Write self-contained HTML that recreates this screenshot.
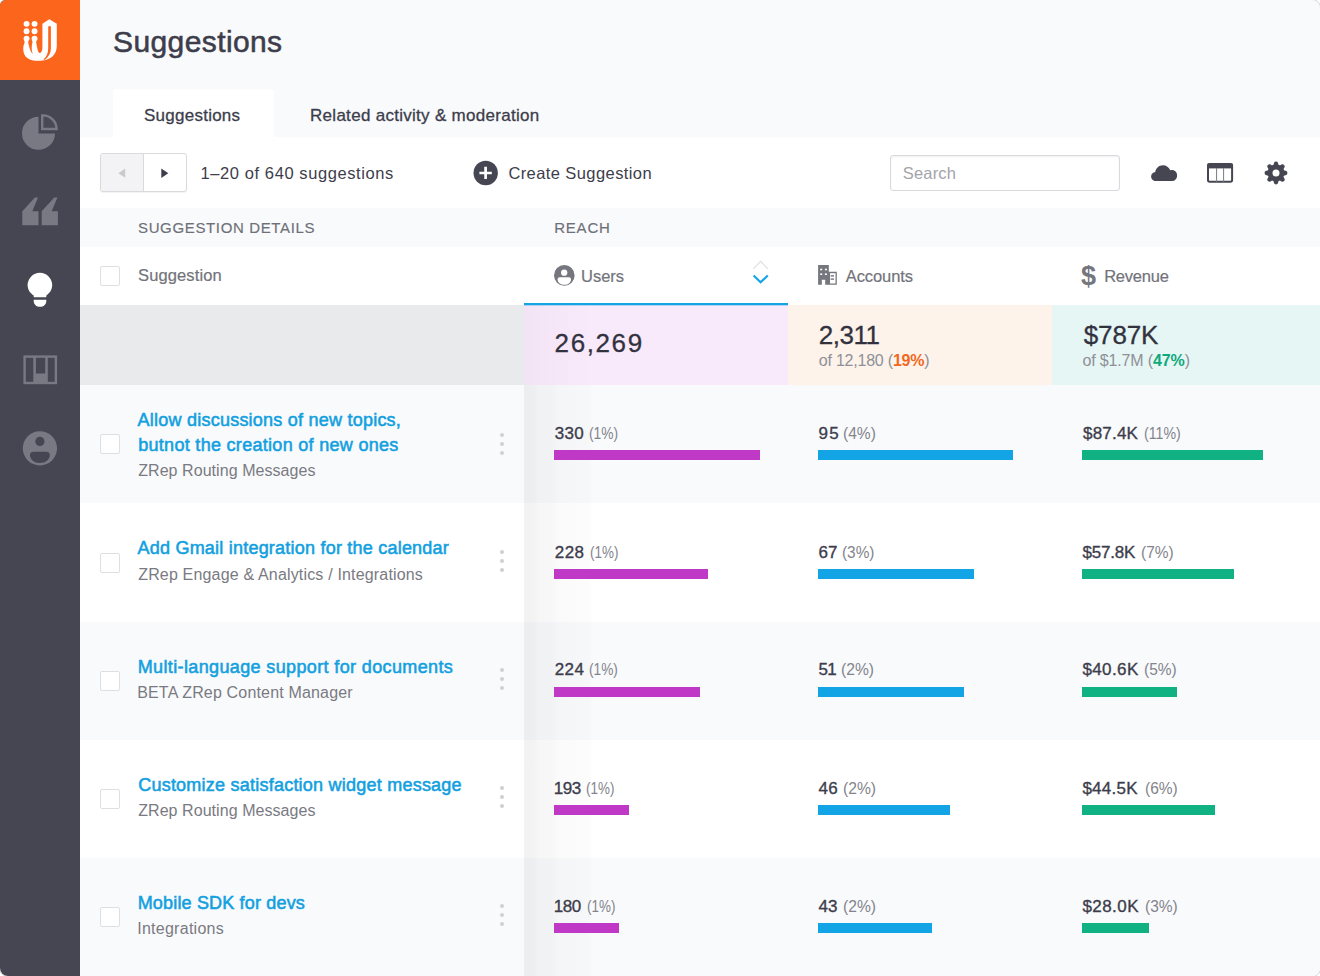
<!DOCTYPE html>
<html lang="en">
<head>
<meta charset="utf-8">
<title>Suggestions</title>
<style>
*{box-sizing:border-box;margin:0;padding:0}
html,body{width:1320px;height:976px;overflow:hidden;background:#fff}
body{font-family:"Liberation Sans",sans-serif;color:#3d3d4b;position:relative}
.app{position:absolute;left:0;top:0;width:1320px;height:976px;background:#f9fafc;border-radius:6px 8px 8px 8px;overflow:hidden;box-shadow:0 0 0 1px rgba(60,60,70,.18)}
.abs{position:absolute}
.t{position:absolute;white-space:nowrap;line-height:1}
/* sidebar */
.side{position:absolute;left:0;top:0;width:80px;height:976px;background:#464652}
.logo{position:absolute;left:0;top:0;width:80px;height:80px;background:#fc661c}
/* bands */
.band{position:absolute;left:80px;width:1240px}
.white{background:#fff}
.alt{background:#f9fafc}
.tab{position:absolute;left:113px;top:89px;width:161px;height:49px;background:#fff;border-radius:3px 3px 0 0}
.pager{position:absolute;left:100px;top:153px;width:87px;height:39px;border:1px solid #d9dadd;border-radius:3px;background:#fff;box-shadow:0 1px 1px rgba(0,0,0,.05)}
.pager .l{position:absolute;left:0;top:0;width:43px;height:37px;background:#f3f3f5;border-right:1px solid #d9dadd;border-radius:2px 0 0 2px}
.search{position:absolute;left:890px;top:155px;width:230px;height:36px;border:1px solid #d7d9dd;border-radius:3px;background:#fff;box-shadow:inset 0 1px 2px rgba(0,0,0,.06)}
.cb{position:absolute;left:100px;width:20px;height:20px;border:1px solid #dedfe3;border-radius:2px;background:#fff}
.ttl{color:#12a0df;font-size:18px;-webkit-text-stroke:.55px #12a0df}
.sub{color:#797a82;font-size:16px}
.num{font-size:17px;color:#3d3d4b;-webkit-text-stroke:.35px #3d3d4b}
.pct{color:#83848c;font-size:17px;transform-origin:0 50%}
.bar{position:absolute;height:10px}
.m{background:#c038c6}.b{background:#13a4e6}.g{background:#10b284}
.dots{position:absolute;left:500px;width:4px}
.dots i{display:block;width:4px;height:4px;border-radius:2px;background:#cfd0d4;margin-bottom:5px}
.shade{position:absolute;left:524px;top:385px;width:68px;height:591px;background:linear-gradient(90deg,rgba(20,20,30,.056) 0,rgba(20,20,30,.052) 15%,rgba(20,20,30,.036) 22%,rgba(20,20,30,.03) 42%,rgba(20,20,30,.019) 50%,rgba(20,20,30,.013) 96%,rgba(20,20,30,0) 100%)}
.shade2{position:absolute;left:524px;top:305px;width:68px;height:80px;background:linear-gradient(90deg,rgba(60,30,70,.035),rgba(60,30,70,.015) 50%,rgba(60,30,70,0))}
</style>
</head>
<body>
<div class="app">

<!-- bands -->
<div class="band white" style="top:137px;height:71px"></div>
<div class="band white" style="top:247px;height:58px"></div>
<div class="tab"></div>

<!-- summary row -->
<div class="abs" style="left:80px;top:305px;width:444px;height:80px;background:#e9eaec"></div>
<div class="abs" style="left:524px;top:305px;width:264px;height:80px;background:#f9eafb"></div>
<div class="abs" style="left:788px;top:305px;width:264px;height:80px;background:#fdf3ea"></div>
<div class="abs" style="left:1052px;top:305px;width:268px;height:80px;background:#e5f6f4"></div>

<!-- rows -->
<div class="band alt" style="top:385px;height:118px"></div>
<div class="band white" style="top:503px;height:119px"></div>
<div class="band alt" style="top:622px;height:118px"></div>
<div class="band white" style="top:740px;height:118px"></div>
<div class="band alt" style="top:858px;height:118px"></div>
<div class="shade"></div><div class="shade2"></div>
<div class="abs" style="left:524px;top:303px;width:264px;height:2px;background:#14a4e6"></div><div class="abs" style="left:524px;top:305px;width:264px;height:1px;background:rgba(20,164,230,.3)"></div>

<!-- sidebar -->
<div class="side">
  <div class="logo">
    <svg class="abs" style="left:15px;top:10px" width="50" height="60" viewBox="0 0 50 60">
      <g fill="#fff">
        <circle cx="11.56" cy="13.84" r="2.95"/><circle cx="19.56" cy="13.84" r="2.95"/>
        <circle cx="11.56" cy="21.2" r="2.95"/><circle cx="19.56" cy="21.2" r="2.95"/>
        <circle cx="11.56" cy="28.6" r="2.95"/><circle cx="19.56" cy="28.6" r="2.95"/>
        <path d="M9.5 32.6 C9.5 34.5 8.3 35 8.3 37.5 L8.3 39.5 C8.3 46.5 14 50.8 21 50.8 L24.5 50.8 C34.5 50.8 41.8 45.5 41.8 36 L41.8 13.8 L34.4 9.2 L27.4 13.8 L27.4 38 C27.4 41 26 43 24.6 43 C23 43 22.3 38.5 21.2 32.6 L21.2 30 L17.4 30 L17.4 32.6 C16.5 36 16.3 40 17.8 44 C15 41.5 14.2 37 13.2 32.6 L13.2 30 L9.5 30 Z"/>
      </g>
      <path fill="#fc661c" d="M33.2 17.3 Q33.2 16 34.55 16 Q35.9 16 35.9 17.3 L35.9 38 C35.9 44 32.5 48 29.2 50.1 L28.5 49.2 C31.5 47 33.2 43.5 33.2 38 Z"/>
    </svg>
  </div>
  <!-- pie -->
  <svg class="abs" style="left:20px;top:112px" width="40" height="40" viewBox="20 112 40 40">
    <path fill="#797983" d="M38.5 116.8 A16.5 16.5 0 1 0 55 133.4 L38.5 133.4 Z"/>
    <path fill="#494956" stroke="#797983" stroke-width="2.4" stroke-linejoin="miter" d="M42.2 129 L42.2 115.4 A13.8 13.8 0 0 1 56.6 129 Z"/>
  </svg>
  <!-- quotes -->
  <svg class="abs" style="left:20px;top:195px" width="40" height="32" viewBox="20 195 40 32">
    <path fill="#797983" d="M22.3 211.3 L34.9 197.4 L38 197.4 L32.3 211.3 L38.5 211.3 L38.5 225.3 L22.3 225.3 Z"/>
    <path fill="#797983" d="M41.7 211.3 L54.3 197.4 L57.4 197.4 L51.7 211.3 L57.9 211.3 L57.9 225.3 L41.7 225.3 Z"/>
  </svg>
  <!-- bulb -->
  <svg class="abs" style="left:24px;top:270px" width="32" height="40" viewBox="24 270 32 40">
    <path fill="#fff" d="M33.7 297.3 L33.7 295.4 C29.8 293.2 27.6 289.4 27.6 285.1 A12.3 12.3 0 0 1 52.2 285.1 C52.2 289.4 50 293.2 46.3 295.4 L46.3 297.3 Z"/>
    <path fill="#fff" d="M33.7 299.8 L46.3 299.8 L46.3 301 C46.3 304.5 43.5 306.8 40 306.8 C36.5 306.8 33.7 304.5 33.7 301 Z"/>
  </svg>
  <!-- board -->
  <svg class="abs" style="left:20px;top:352px" width="40" height="36" viewBox="20 352 40 36">
    <rect x="24.6" y="356.6" width="31.3" height="26.4" fill="none" stroke="#797983" stroke-width="2.4"/>
    <rect x="33.3" y="356" width="2.6" height="27" fill="#797983"/>
    <rect x="45.2" y="356" width="2.6" height="27" fill="#797983"/>
    <rect x="34" y="373.5" width="12" height="10" fill="#797983"/>
  </svg>
  <!-- user -->
  <svg class="abs" style="left:20px;top:428px" width="40" height="40" viewBox="20 428 40 40">
    <circle cx="39.9" cy="448.3" r="17.1" fill="#797983"/>
    <circle cx="39.9" cy="441.4" r="4.6" fill="#464652"/>
    <path fill="#464652" d="M30 455 C30 452.8 31.5 451.8 33.5 451.8 L46.3 451.8 C48.3 451.8 49.8 452.8 49.8 455 C49.8 459.5 45.5 463 39.9 463 C34.3 463 30 459.5 30 455 Z"/>
  </svg>
</div>

<!-- title -->
<div class="t" id="title" style="-webkit-text-stroke:.55px #3d3d4b;left:113.0px;top:27px;font-size:30px;letter-spacing:0.40px">Suggestions</div>

<!-- tabs -->
<div class="t" id="tab1" style="left:144.0px;top:107px;font-size:17px;-webkit-text-stroke:.3px #3d3d4b;letter-spacing:0.25px">Suggestions</div>
<div class="t" id="tab2" style="left:310.0px;top:107px;font-size:17px;-webkit-text-stroke:.3px #3d3d4b;letter-spacing:0.29px">Related activity &amp; moderation</div>

<!-- toolbar -->
<div class="pager"><div class="l"></div></div>
<div class="t" id="range" style="left:200.6px;top:165px;font-size:16.5px;letter-spacing:0.58px">1–20 of 640 suggestions</div>
<div class="t" id="create" style="left:508.4px;top:165px;font-size:16.5px;letter-spacing:0.41px">Create Suggestion</div>
<div class="search"></div>
<div class="t" id="search" style="left:902.8px;top:165px;font-size:16.5px;color:#a3a4aa;letter-spacing:0.16px">Search</div>


<!-- pager arrows -->
<svg class="abs" style="left:100px;top:153px" width="87" height="39" viewBox="100 153 87 39">
  <path fill="#c9cacf" d="M125.2 168.6 L125.2 177.8 L118.4 173.2 Z"/>
  <path fill="#3d3d4b" d="M161.3 168.4 L161.3 178 L168.3 173.2 Z"/>
</svg>
<!-- plus circle -->
<svg class="abs" style="left:472px;top:159px" width="28" height="28" viewBox="472 159 28 28">
  <circle cx="485.7" cy="173" r="12.2" fill="#464652"/>
  <path stroke="#fff" stroke-width="2.7" d="M479.4 173 H491.8 M485.6 166.8 V179"/>
</svg>
<!-- cloud -->
<svg class="abs" style="left:1148px;top:160px" width="32" height="24" viewBox="1148 160 32 24">
  <path fill="#464652" d="M1156 181 C1153.2 181 1151.1 179 1151.1 176.4 C1151.1 174 1152.9 172.1 1155.3 171.9 C1155.8 168.1 1159 165.2 1162.9 165.2 C1166.3 165.2 1169.1 167.3 1170.2 170.3 C1170.8 170.1 1171.5 170 1172.1 170 C1174.9 170 1177.1 172.4 1177.1 175.4 C1177.1 178.5 1174.8 181 1171.9 181 Z"/>
</svg>
<!-- columns -->
<svg class="abs" style="left:1204px;top:160px" width="32" height="26" viewBox="1204 160 32 26">
  <rect x="1208" y="164.1" width="24.1" height="17.6" rx="1.6" fill="#fff" stroke="#464652" stroke-width="2"/>
  <rect x="1207.5" y="163.6" width="25.1" height="4.8" fill="#464652"/>
  <path stroke="#7a7a84" stroke-width="1" d="M1216.6 168 V182 M1223.6 168 V182"/>
</svg>
<!-- gear -->
<svg class="abs" style="left:1261.85px;top:159px" width="28" height="28" viewBox="-14 -14 28 28">
  <g fill="#464652"><circle r="8.4"/><path d="M-2.9 -7 L-1.9 -10.3 Q-1.7 -11.4 0 -11.4 Q1.7 -11.4 1.9 -10.3 L2.9 -7 Z" transform="rotate(0)"/><path d="M-2.9 -7 L-1.9 -10.3 Q-1.7 -11.4 0 -11.4 Q1.7 -11.4 1.9 -10.3 L2.9 -7 Z" transform="rotate(45)"/><path d="M-2.9 -7 L-1.9 -10.3 Q-1.7 -11.4 0 -11.4 Q1.7 -11.4 1.9 -10.3 L2.9 -7 Z" transform="rotate(90)"/><path d="M-2.9 -7 L-1.9 -10.3 Q-1.7 -11.4 0 -11.4 Q1.7 -11.4 1.9 -10.3 L2.9 -7 Z" transform="rotate(135)"/><path d="M-2.9 -7 L-1.9 -10.3 Q-1.7 -11.4 0 -11.4 Q1.7 -11.4 1.9 -10.3 L2.9 -7 Z" transform="rotate(180)"/><path d="M-2.9 -7 L-1.9 -10.3 Q-1.7 -11.4 0 -11.4 Q1.7 -11.4 1.9 -10.3 L2.9 -7 Z" transform="rotate(225)"/><path d="M-2.9 -7 L-1.9 -10.3 Q-1.7 -11.4 0 -11.4 Q1.7 -11.4 1.9 -10.3 L2.9 -7 Z" transform="rotate(270)"/><path d="M-2.9 -7 L-1.9 -10.3 Q-1.7 -11.4 0 -11.4 Q1.7 -11.4 1.9 -10.3 L2.9 -7 Z" transform="rotate(315)"/></g>
  <circle r="3.5" fill="#fff"/>
</svg>
<!-- users icon -->
<svg class="abs" style="left:552px;top:263px" width="24" height="25" viewBox="552 263 24 25">
  <circle cx="564.3" cy="275.4" r="10.3" fill="#75767e"/>
  <circle cx="564.2" cy="272.7" r="3.15" fill="#fff"/>
  <path fill="#fff" d="M557.6 279.4 C557.6 278 558.4 277.2 559.6 277.2 L569 277.2 C570.2 277.2 571 278 571 279.4 C571 282.4 568.2 284.7 564.3 284.7 C560.4 284.7 557.6 282.4 557.6 279.4 Z"/>
</svg>
<!-- sort -->
<svg class="abs" style="left:750px;top:258px" width="22" height="28" viewBox="750 258 22 28">
  <path fill="none" stroke="#dcdde1" stroke-width="1.1" d="M753.3 268.8 L760.6 261.4 L768 268.8"/>
  <path fill="none" stroke="#14a4e6" stroke-width="2.1" d="M753.6 275.4 L760.6 282.3 L767.8 275.4"/>
</svg>
<!-- accounts icon -->
<svg class="abs" style="left:816px;top:263px" width="24" height="24" viewBox="816 263 24 24">
  <path fill="#75767e" d="M818.1 265 H828.8 V271.8 H836.8 V284.8 H825.2 V279.8 H821.8 V284.8 H818.1 Z"/>
  <rect x="830" y="273.2" width="5.5" height="10.3" fill="#fff"/>
  <g fill="#fff"><rect x="820.2" y="268.7" width="2" height="1.6"/><rect x="824.9" y="268.7" width="2" height="1.6"/><rect x="820.2" y="273.4" width="2" height="1.6"/><rect x="824.9" y="273.4" width="2" height="1.6"/></g>
  <g fill="#75767e"><rect x="830.6" y="275.2" width="3.4" height="1.4"/><rect x="830.6" y="278.4" width="3.4" height="1.4"/></g>
</svg>

<div class="t" id="dollar" style="left:1081px;top:263px;font-size:27px;font-weight:bold;color:#75767e">$</div>
<!-- group header -->
<div class="t" id="gh1" style="left:138.0px;top:220px;font-size:15px;letter-spacing:0.64px;color:#6e6f77;-webkit-text-stroke:.15px #6e6f77">SUGGESTION DETAILS</div>
<div class="t" id="gh2" style="left:554.2px;top:220px;font-size:15px;letter-spacing:0.79px;color:#6e6f77;-webkit-text-stroke:.15px #6e6f77">REACH</div>

<!-- column header -->
<div class="cb" style="top:266px"></div>
<div class="t" id="ch1" style="-webkit-text-stroke:.2px #72737b;left:138.0px;top:267px;font-size:16.5px;color:#72737b;letter-spacing:0.13px">Suggestion</div>
<div class="t" id="ch2" style="-webkit-text-stroke:.2px #72737b;left:581.0px;top:268px;font-size:16.5px;color:#72737b;letter-spacing:0.00px">Users</div>
<div class="t" id="ch3" style="-webkit-text-stroke:.2px #72737b;left:845.8px;top:268px;font-size:16.5px;color:#72737b;letter-spacing:-0.09px">Accounts</div>
<div class="t" id="ch4" style="-webkit-text-stroke:.2px #72737b;left:1104.2px;top:268px;font-size:16.5px;color:#72737b;letter-spacing:-0.23px">Revenue</div>

<!-- summary text -->
<div class="t" id="s1" style="-webkit-text-stroke:.3px #32323f;left:554.6px;top:330px;font-size:26px;color:#32323f;letter-spacing:1.60px">26,269</div>
<div class="t" id="s2" style="-webkit-text-stroke:.3px #32323f;left:818.8px;top:322px;font-size:26px;color:#32323f;letter-spacing:-0.50px">2,311</div>
<div class="t" id="s2b" style="left:818.8px;top:353px;font-size:16px;color:#8f9097;letter-spacing:-0.22px">of 12,180 (<b style="color:#f2671f">19%</b>)</div>
<div class="t" id="s3" style="-webkit-text-stroke:.3px #32323f;left:1083.8px;top:322px;font-size:26px;color:#32323f;letter-spacing:-0.15px">$787K</div>
<div class="t" id="s3b" style="left:1082.4px;top:353px;font-size:16px;color:#8f9097;letter-spacing:-0.14px">of $1.7M (<b style="color:#10a97c">47%</b>)</div>

<!-- row 1 -->
<div class="cb" style="top:434px"></div>
<div class="t ttl" id="r1a" style="left:137.6px;top:411px;font-size:18px;letter-spacing:0.23px">Allow discussions of new topics,</div>
<div class="t ttl" id="r1b" style="left:138.2px;top:436px;font-size:18px;letter-spacing:0.30px">butnot the creation of new ones</div>
<div class="t sub" id="r1c" style="left:138.2px;top:463px;font-size:16px;letter-spacing:0.06px">ZRep Routing Messages</div>
<div class="dots" style="top:433px"><i></i><i></i><i></i></div>
<div class="t num" id="r1u" style="left:554.8px;top:425px;font-size:17px;letter-spacing:0.25px">330</div>
<div class="t pct" id="r1up" style="left:589.4px;top:425px;font-size:17px;letter-spacing:0px;transform:scaleX(0.811)">(1%)</div>
<div class="bar m" style="left:554px;top:450px;width:206px"></div>
<div class="t num" id="r1k" style="left:818.4px;top:425px;font-size:17px;letter-spacing:1.50px">95</div>
<div class="t pct" id="r1kp" style="left:843.2px;top:425px;font-size:17px;letter-spacing:0px;transform:scaleX(0.915)">(4%)</div>
<div class="bar b" style="left:818px;top:450px;width:195px"></div>
<div class="t num" id="r1r" style="left:1083.0px;top:425px;font-size:17px;letter-spacing:0.20px">$87.4K</div>
<div class="t pct" id="r1rp" style="left:1144.0px;top:425px;font-size:17px;letter-spacing:0px;transform:scaleX(0.833)">(11%)</div>
<div class="bar g" style="left:1082px;top:450px;width:181px"></div>

<!-- row 2 -->
<div class="cb" style="top:553px"></div>
<div class="t ttl" id="r2a" style="left:137.5px;top:539px;font-size:18px;letter-spacing:0.22px">Add Gmail integration for the calendar</div>
<div class="t sub" id="r2c" style="left:138.2px;top:567px;font-size:16px;letter-spacing:0.17px">ZRep Engage &amp; Analytics / Integrations</div>
<div class="dots" style="top:550px"><i></i><i></i><i></i></div>
<div class="t num" id="r2u" style="left:554.8px;top:544px;font-size:17px;letter-spacing:0.45px">228</div>
<div class="t pct" id="r2up" style="left:589.8px;top:544px;font-size:17px;letter-spacing:0px;transform:scaleX(0.790)">(1%)</div>
<div class="bar m" style="left:554px;top:569px;width:154px"></div>
<div class="t num" id="r2k" style="left:818.4px;top:544px;font-size:17px;letter-spacing:0.10px">67</div>
<div class="t pct" id="r2kp" style="left:842.4px;top:544px;font-size:17px;letter-spacing:0px;transform:scaleX(0.905)">(3%)</div>
<div class="bar b" style="left:818px;top:569px;width:156px"></div>
<div class="t num" id="r2r" style="left:1082.4px;top:544px;font-size:17px;letter-spacing:-0.20px">$57.8K</div>
<div class="t pct" id="r2rp" style="left:1140.8px;top:544px;font-size:17px;letter-spacing:0px;transform:scaleX(0.911)">(7%)</div>
<div class="bar g" style="left:1082px;top:569px;width:152px"></div>

<!-- row 3 -->
<div class="cb" style="top:671px"></div>
<div class="t ttl" id="r3a" style="left:137.7px;top:658px;font-size:18px;letter-spacing:0.37px">Multi-language support for documents</div>
<div class="t sub" id="r3c" style="left:137.2px;top:685px;font-size:16px;letter-spacing:0.17px">BETA ZRep Content Manager</div>
<div class="dots" style="top:668px"><i></i><i></i><i></i></div>
<div class="t num" id="r3u" style="left:554.8px;top:661px;font-size:17px;letter-spacing:0.35px">224</div>
<div class="t pct" id="r3up" style="left:588.8px;top:661px;font-size:17px;letter-spacing:0px;transform:scaleX(0.805)">(1%)</div>
<div class="bar m" style="left:554px;top:687px;width:146px"></div>
<div class="t num" id="r3k" style="left:818.4px;top:661px;font-size:17px;letter-spacing:-0.50px">51</div>
<div class="t pct" id="r3kp" style="left:841.2px;top:661px;font-size:17px;letter-spacing:0px;transform:scaleX(0.918)">(2%)</div>
<div class="bar b" style="left:818px;top:687px;width:146px"></div>
<div class="t num" id="r3r" style="left:1082.4px;top:661px;font-size:17px;letter-spacing:0.40px">$40.6K</div>
<div class="t pct" id="r3rp" style="left:1144.0px;top:661px;font-size:17px;letter-spacing:0px;transform:scaleX(0.911)">(5%)</div>
<div class="bar g" style="left:1082px;top:687px;width:95px"></div>

<!-- row 4 -->
<div class="cb" style="top:789px"></div>
<div class="t ttl" id="r4a" style="left:138.2px;top:776px;font-size:18px;letter-spacing:0.23px">Customize satisfaction widget message</div>
<div class="t sub" id="r4c" style="left:138.2px;top:803px;font-size:16px;letter-spacing:0.06px">ZRep Routing Messages</div>
<div class="dots" style="top:786px"><i></i><i></i><i></i></div>
<div class="t num" id="r4u" style="left:553.8px;top:780px;font-size:17px;letter-spacing:-0.50px">193</div>
<div class="t pct" id="r4up" style="left:586.2px;top:780px;font-size:17px;letter-spacing:0px;transform:scaleX(0.790)">(1%)</div>
<div class="bar m" style="left:554px;top:805px;width:75px"></div>
<div class="t num" id="r4k" style="left:818.4px;top:780px;font-size:17px;letter-spacing:0.30px">46</div>
<div class="t pct" id="r4kp" style="left:843.2px;top:780px;font-size:17px;letter-spacing:0px;transform:scaleX(0.920)">(2%)</div>
<div class="bar b" style="left:818px;top:805px;width:132px"></div>
<div class="t num" id="r4r" style="left:1082.4px;top:780px;font-size:17px;letter-spacing:0.24px">$44.5K</div>
<div class="t pct" id="r4rp" style="left:1144.6px;top:780px;font-size:17px;letter-spacing:0px;transform:scaleX(0.911)">(6%)</div>
<div class="bar g" style="left:1082px;top:805px;width:133px"></div>

<!-- row 5 -->
<div class="cb" style="top:907px"></div>
<div class="t ttl" id="r5a" style="left:137.7px;top:894px;font-size:18px;letter-spacing:0.17px">Mobile SDK for devs</div>
<div class="t sub" id="r5c" style="left:137.2px;top:921px;font-size:16px;letter-spacing:0.27px">Integrations</div>
<div class="dots" style="top:904px"><i></i><i></i><i></i></div>
<div class="t num" id="r5u" style="left:553.8px;top:898px;font-size:17px;letter-spacing:-0.50px">180</div>
<div class="t pct" id="r5up" style="left:587.2px;top:898px;font-size:17px;letter-spacing:0px;transform:scaleX(0.791)">(1%)</div>
<div class="bar m" style="left:554px;top:923px;width:65px"></div>
<div class="t num" id="r5k" style="left:818.4px;top:898px;font-size:17px;letter-spacing:0.10px">43</div>
<div class="t pct" id="r5kp" style="left:842.6px;top:898px;font-size:17px;letter-spacing:0px;transform:scaleX(0.920)">(2%)</div>
<div class="bar b" style="left:818px;top:923px;width:114px"></div>
<div class="t num" id="r5r" style="left:1082.4px;top:898px;font-size:17px;letter-spacing:0.44px">$28.0K</div>
<div class="t pct" id="r5rp" style="left:1144.6px;top:898px;font-size:17px;letter-spacing:0px;transform:scaleX(0.911)">(3%)</div>
<div class="bar g" style="left:1082px;top:923px;width:67px"></div>

</div>
</body>
</html>
